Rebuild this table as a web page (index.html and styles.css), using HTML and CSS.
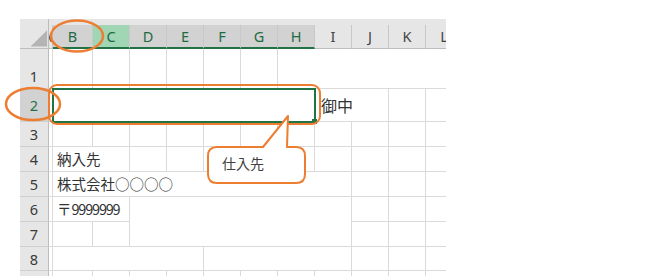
FILE: index.html
```html
<!DOCTYPE html>
<html lang="ja">
<head>
<meta charset="utf-8">
<title>Sheet</title>
<link rel="stylesheet" href="styles.css">
</head>
<body>
<div class="page">
  <div class="sheet">
    <div class="corner"><svg width="29" height="30" viewBox="0 0 29 30"><polygon points="28,11 28,28 11,28" fill="#b4b4b4"/></svg></div>
    <div class="strip"></div>
    <div class="ch ch-a">A</div>
    <div class="ch sel">B</div>
    <div class="ch active">C</div>
    <div class="ch sel">D</div>
    <div class="ch sel">E</div>
    <div class="ch sel">F</div>
    <div class="ch sel">G</div>
    <div class="ch sel">H</div>
    <div class="ch">I</div>
    <div class="ch">J</div>
    <div class="ch">K</div>
    <div class="ch">L</div>

    <div class="rh rh-bottom">1</div>
    <div class="c"></div>
    <div class="c"></div><div class="c"></div><div class="c"></div><div class="c"></div><div class="c"></div><div class="c"></div>
    <div class="c s5"></div>

    <div class="rh rsel">2</div>
    <div class="c"></div>
    <div class="c s7 selbox"></div>
    <div class="c s2 txt big">御中</div>
    <div class="c"></div><div class="c"></div>

    <div class="rh">3</div>
    <div class="c"></div>
    <div class="c"></div><div class="c"></div><div class="c"></div><div class="c"></div><div class="c"></div><div class="c"></div><div class="c"></div><div class="c"></div><div class="c"></div><div class="c"></div><div class="c"></div>

    <div class="rh">4</div>
    <div class="c"></div>
    <div class="c s2 txt">納入先</div>
    <div class="c"></div><div class="c"></div><div class="c"></div><div class="c"></div><div class="c"></div><div class="c"></div><div class="c"></div><div class="c"></div><div class="c"></div>

    <div class="rh">5</div>
    <div class="c"></div>
    <div class="c s8 txt">株式会社○○○○</div>
    <div class="c"></div><div class="c"></div><div class="c"></div>

    <div class="rh">6</div>
    <div class="c"></div>
    <div class="c s2 txt"><span>〒</span><span class="num">9999999</span></div>
    <div class="c s6 r2"></div>
    <div class="c"></div><div class="c"></div><div class="c"></div>

    <div class="rh">7</div>
    <div class="c"></div>
    <div class="c"></div><div class="c"></div>
    <div class="c"></div><div class="c"></div><div class="c"></div>

    <div class="rh">8</div>
    <div class="c"></div>
    <div class="c s4"></div>
    <div class="c s4"></div>
    <div class="c"></div><div class="c"></div><div class="c"></div>

    <div class="rh">9</div>
    <div class="c"></div>
    <div class="c"></div><div class="c"></div><div class="c"></div><div class="c"></div><div class="c"></div><div class="c"></div><div class="c"></div><div class="c"></div><div class="c"></div><div class="c"></div><div class="c"></div>
  </div>

  <svg class="annot" width="662" height="276" viewBox="0 0 662 276">
    <ellipse cx="77" cy="36" rx="26" ry="15.5" fill="none" stroke="#ed7d31" stroke-width="2.5"/>
    <ellipse cx="33" cy="104" rx="27" ry="16" fill="none" stroke="#ed7d31" stroke-width="2.5"/>
    <rect x="49" y="85" width="271" height="39" rx="8" ry="8" fill="none" stroke="#ed7d31" stroke-width="2"/>
    <path d="M217,147 L263,147 L288,116 L287,147 L296,147 Q305,147 305,156 L305,174 Q305,183 296,183 L217,183 Q208,183 208,174 L208,156 Q208,147 217,147 Z" fill="#ffffff" stroke="#ed7d31" stroke-width="2" stroke-linejoin="round"/>
    <text x="222" y="169" class="callout-text">仕入先</text>
  </svg>
</div>
</body>
</html>
```

FILE: styles.css
```css
html, body {
  margin: 0;
  padding: 0;
  background: #ffffff;
}

body {
  width: 662px;
  height: 276px;
  overflow: hidden;
  font-family: "Noto Sans CJK JP", "Noto Sans", sans-serif;
}

.page {
  position: relative;
  width: 662px;
  height: 276px;
  padding: 19px 0 0 20px;
  box-sizing: border-box;
}

.sheet {
  width: 426px;
  height: 257px;
  overflow: hidden;
  display: grid;
  grid-template-columns: 29px 4px 40px repeat(10, 37px);
  grid-template-rows: 6px 24px 40px 33px 25px 25px 25px 25px 25px 24px 25px;
  background: #ffffff;
}

.corner {
  grid-row: span 2;
  background: #e6e6e6;
  border-right: 1px solid #bdbdbd;
  border-bottom: 1px solid #bdbdbd;
  box-sizing: border-box;
  display: flex;
  overflow: hidden;
}

.strip {
  grid-column: 2 / -1;
  background: #e6e6e6;
}

.ch {
  background: #e6e6e6;
  border-right: 1px solid #c8c8c8;
  border-bottom: 1px solid #bdbdbd;
  box-sizing: border-box;
  display: flex;
  align-items: center;
  justify-content: center;
  overflow: hidden;
  font-family: "Noto Sans", "Liberation Sans", sans-serif;
  font-size: 14.5px;
  color: #444444;
  line-height: 1;
}

.ch-a {
  justify-content: flex-end;
  color: #555555;
}

.ch.sel {
  background: #d2d2d2;
  color: #1e6b43;
  border-bottom: 2px solid #217346;
}

.ch.active {
  background: #a0d6b4;
  color: #1e6b43;
  border-bottom: 2px solid #217346;
}

.rh {
  background: #e6e6e6;
  border-right: 1px solid #bdbdbd;
  border-bottom: 1px solid #cfcfcf;
  box-sizing: border-box;
  display: flex;
  align-items: center;
  justify-content: center;
  font-family: "Noto Sans", "Liberation Sans", sans-serif;
  font-size: 14.5px;
  color: #3a3a3a;
  line-height: 18px;
}

.rh-bottom {
  align-items: flex-end;
  padding-bottom: 3px;
}

.rh.rsel {
  background: #d2d2d2;
  color: #217346;
}

.c {
  border-right: 1px solid #dadada;
  border-bottom: 1px solid #dadada;
  box-sizing: border-box;
  background: #ffffff;
  min-width: 0;
}

.s2 { grid-column: span 2; }
.s4 { grid-column: span 4; }
.s5 { grid-column: span 5; }
.s6 { grid-column: span 6; }
.s7 { grid-column: span 7; }
.s8 { grid-column: span 8; }
.r2 { grid-row: span 2; }

.txt {
  display: flex;
  align-items: center;
  padding-left: 4px;
  font-size: 14.5px;
  color: #333333;
  white-space: nowrap;
  line-height: 1;
}

.txt.big {
  font-size: 16px;
  padding-left: 6px;
}

.num {
  letter-spacing: -1.2px;
}

.selbox {
  position: relative;
  outline: 2px solid #217346;
  outline-offset: -1px;
  z-index: 1;
}

.selbox::after {
  content: "";
  position: absolute;
  right: -3px;
  bottom: -3px;
  width: 5px;
  height: 5px;
  background: #217346;
}

.annot {
  position: absolute;
  left: 0;
  top: 0;
  pointer-events: none;
  z-index: 2;
}

.callout-text {
  font-family: "Noto Sans CJK JP", sans-serif;
  font-size: 14px;
  fill: #404040;
}
```
